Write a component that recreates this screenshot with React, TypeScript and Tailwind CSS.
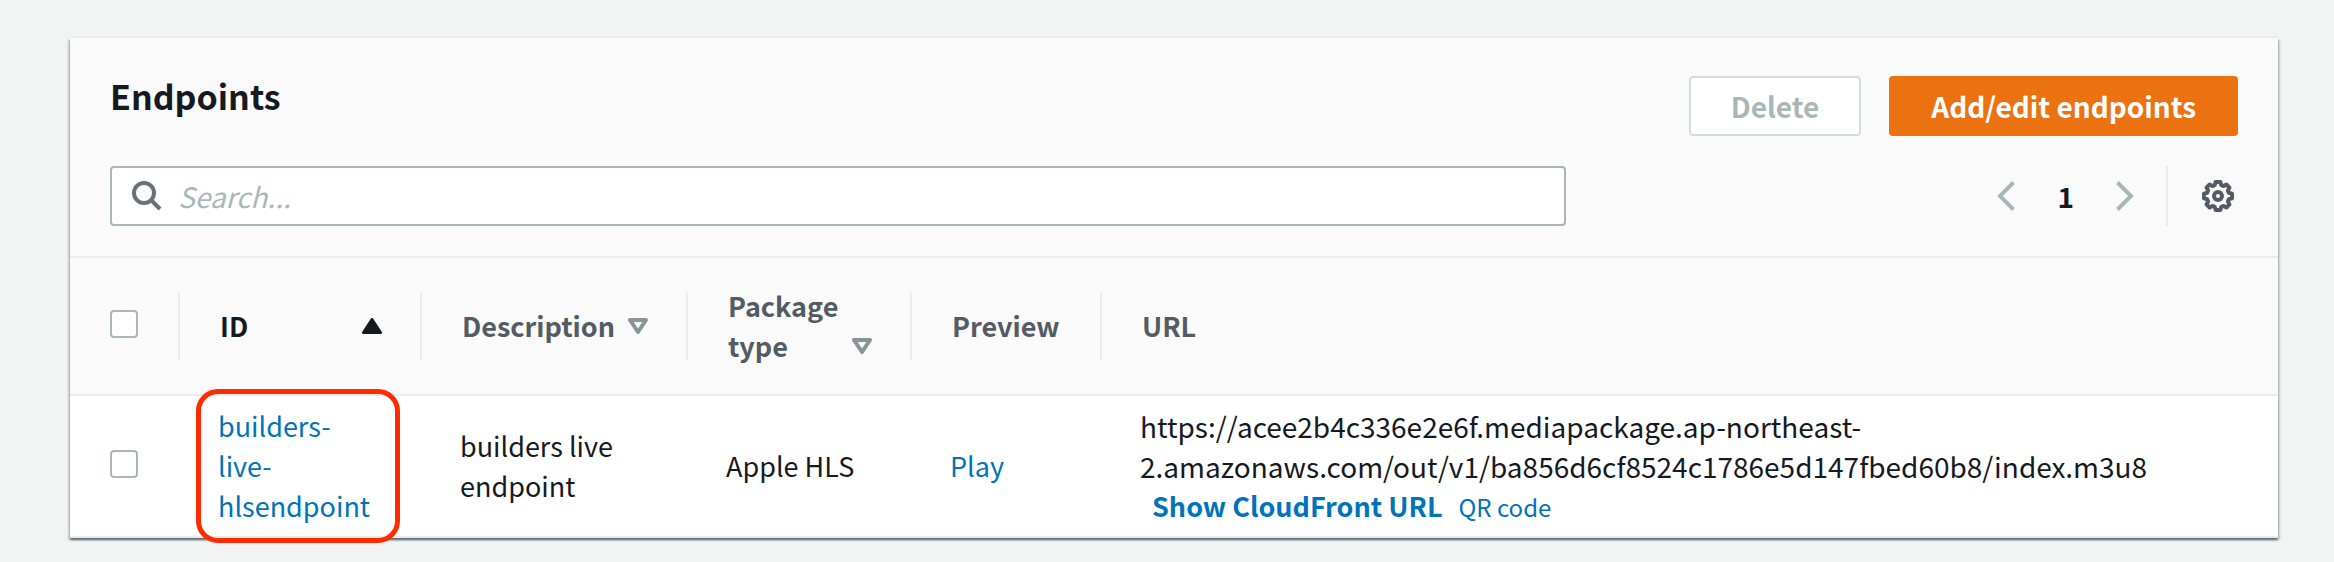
import type { ReactNode } from "react";

function SortIcon({ active = false }: { active?: boolean }) {
  return active ? (
    <svg className="h-4 w-5 shrink-0" viewBox="0 0 20 16" aria-hidden="true">
      <path d="M10 1.5 18.5 14.5H1.5Z" fill="#16191f" stroke="#16191f" strokeWidth="3" strokeLinejoin="round" />
    </svg>
  ) : (
    <svg className="h-4 w-5 shrink-0" viewBox="0 0 20 16" aria-hidden="true">
      <path d="M2 2H18L10 14Z" fill="none" stroke="#879596" strokeWidth="4" strokeLinejoin="round" />
    </svg>
  );
}

function Checkbox({ label }: { label: string }) {
  return (
    <div className="pb-1">
      <input
        type="checkbox"
        aria-label={label}
        className="block size-7 appearance-none rounded-sm border-2 border-[#aab7b8] bg-white checked:bg-[#0073bb]"
      />
    </div>
  );
}

function HeaderCell({ children, last = false }: { children: ReactNode; last?: boolean }) {
  return (
    <th scope="col" className="border-b-2 border-[#eaeded] bg-[#fafafa] px-0 py-[34px] text-left font-bold text-[#545b64]">
      <div className={last ? "flex h-[68px] items-center pl-10" : "flex h-[68px] items-center border-r-2 border-[#eaeded] pr-8 pl-10"}>
        {children}
      </div>
    </th>
  );
}

export default function App() {
  return (
    <main className="min-h-screen bg-[#f2f3f3] px-14 pt-[38px] pb-6 font-['Noto_Sans_CJK_SC','Noto_Sans',sans-serif] text-[28px] leading-10 text-[#16191f] lg:pr-14 lg:pl-[70px]">
      <section className="bg-white shadow-[0_2px_2px_0_rgba(0,28,36,0.5),2px_2px_2px_0_rgba(0,28,36,0.15),-2px_2px_2px_0_rgba(0,28,36,0.15),0_-2px_0_0_#eaeded]">
        <header className="border-b-2 border-[#eaeded] bg-[#fafafa] px-10 pt-[38px] pb-[30px]">
          <div className="flex items-start justify-between">
            <h1 className="text-[34px] leading-10 font-bold">Endpoints</h1>
            <div className="flex gap-7">
              <button type="button" disabled className="h-15 rounded-sm border-2 border-[#d5dbdb] bg-white px-10 font-bold text-[#aab7b8]">
                Delete
              </button>
              <button type="button" className="h-15 rounded-sm bg-[#ec7211] px-[42px] font-bold text-white">
                Add/edit endpoints
              </button>
            </div>
          </div>
          <div className="mt-[30px] flex items-center justify-between">
            <label className="flex h-15 w-[68.4%] items-center gap-4 rounded-sm border-2 border-[#aab7b8] bg-white px-5">
              <svg className="size-[30px] shrink-0" viewBox="0 0 30 30" fill="none" stroke="#687078" strokeWidth="4" aria-hidden="true">
                <circle cx="12" cy="12" r="10" />
                <path d="M19 19 28 28" />
              </svg>
              <input
                type="search"
                aria-label="Search"
                placeholder="Search..."
                className="min-w-0 flex-1 bg-transparent italic outline-none placeholder:text-[#aab7b8]"
              />
            </label>
            <nav aria-label="Pagination" className="flex items-center">
              <button type="button" aria-label="Previous page" className="mr-[42px]">
                <svg className="h-[30px] w-[18px]" viewBox="0 0 18 30" fill="none" stroke="#aab7b8" strokeWidth="4" aria-hidden="true">
                  <path d="M16.5 1.5 3 15 16.5 28.5" />
                </svg>
              </button>
              <button type="button" aria-current="page" className="font-bold">
                1
              </button>
              <button type="button" aria-label="Next page" className="ml-[42px]">
                <svg className="h-[30px] w-[18px]" viewBox="0 0 18 30" fill="none" stroke="#aab7b8" strokeWidth="4" aria-hidden="true">
                  <path d="M1.5 1.5 15 15 1.5 28.5" />
                </svg>
              </button>
              <div className="ml-8 flex h-15 items-center border-l-2 border-[#eaeded] pr-1 pl-[34px]">
                <button type="button" aria-label="Preferences">
                  <svg className="size-8" viewBox="0 0 32 32" fill="none" stroke="#545b64" strokeWidth="4" strokeLinejoin="round" aria-hidden="true">
                    <path d="M13.6 2H18.4L19.3 5.2 21.6 6.1 24.4 4.5 27.5 7.6 25.9 10.4 26.8 12.7 30 13.6V18.4L26.8 19.3 25.9 21.6 27.5 24.4 24.4 27.5 21.6 25.9 19.3 26.8 18.4 30H13.6L12.7 26.8 10.4 25.9 7.6 27.5 4.5 24.4 6.1 21.6 5.2 19.3 2 18.4V13.6L5.2 12.7 6.1 10.4 4.5 7.6 7.6 4.5 10.4 6.1 12.7 5.2Z" />
                    <circle cx="16" cy="16" r="4" />
                  </svg>
                </button>
              </div>
            </nav>
          </div>
        </header>

        <table className="w-full table-fixed border-separate border-spacing-0 text-left text-[27px] leading-10">
          <colgroup>
            <col className="w-[110px]" />
            <col className="w-[242px]" />
            <col className="w-[266px]" />
            <col className="w-[224px]" />
            <col className="w-[190px]" />
            <col />
          </colgroup>
          <thead>
            <tr>
              <HeaderCell>
                <Checkbox label="Select all endpoints" />
              </HeaderCell>
              <HeaderCell>
                <button type="button" className="flex w-full items-center justify-between pr-1.5 text-[#16191f]">
                  ID
                  <SortIcon active />
                </button>
              </HeaderCell>
              <HeaderCell>
                <button type="button" className="flex w-full items-center justify-between pr-1.5">
                  Description
                  <SortIcon />
                </button>
              </HeaderCell>
              <HeaderCell>
                <button type="button" className="flex w-full items-end justify-between pr-1.5 text-left">
                  <span>
                    Package
                    <br />
                    type
                  </span>
                  <span className="flex h-10 items-center">
                    <SortIcon />
                  </span>
                </button>
              </HeaderCell>
              <HeaderCell>Preview</HeaderCell>
              <HeaderCell last>URL</HeaderCell>
            </tr>
          </thead>
          <tbody className="[&_td]:border-b-2 [&_td]:border-[#eaeded]">
            <tr>
              <td className="py-2.5 pl-10">
                <Checkbox label="Select builders-live-hlsendpoint" />
              </td>
              <td className="relative py-2.5 pr-10 pl-[38px]">
                <span className="pointer-events-none absolute -top-[7px] -bottom-[7px] left-4 w-[204px] rounded-[22px] border-[5px] border-[#ff2a00]" />
                <a href="#endpoint" className="text-[#0073bb]">
                  builders-live-hlsendpoint
                </a>
              </td>
              <td className="py-2.5 pr-14 pl-[38px]">builders live endpoint</td>
              <td className="py-2.5 pl-[38px]">Apple HLS</td>
              <td className="py-2.5 pl-[38px]">
                <a href="#play" className="text-[#0073bb]">
                  Play
                </a>
              </td>
              <td className="py-2.5 pr-10 pl-[38px]">
                <div className="text-[28px] leading-10">
                  https://acee2b4c336e2e6f.mediapackage.ap-northeast-
                  <wbr />
                  2.amazonaws.com/out/v1/ba856d6cf8524c1786e5d147fbed60b8/index.m3u8
                </div>
                <div className="flex h-10 items-baseline gap-4 pl-3 text-[#0073bb]">
                  <button type="button" className="font-bold">
                    Show CloudFront URL
                  </button>
                  <a href="#qr" className="text-2xl leading-10">
                    QR code
                  </a>
                </div>
              </td>
            </tr>
          </tbody>
        </table>
      </section>
    </main>
  );
}
